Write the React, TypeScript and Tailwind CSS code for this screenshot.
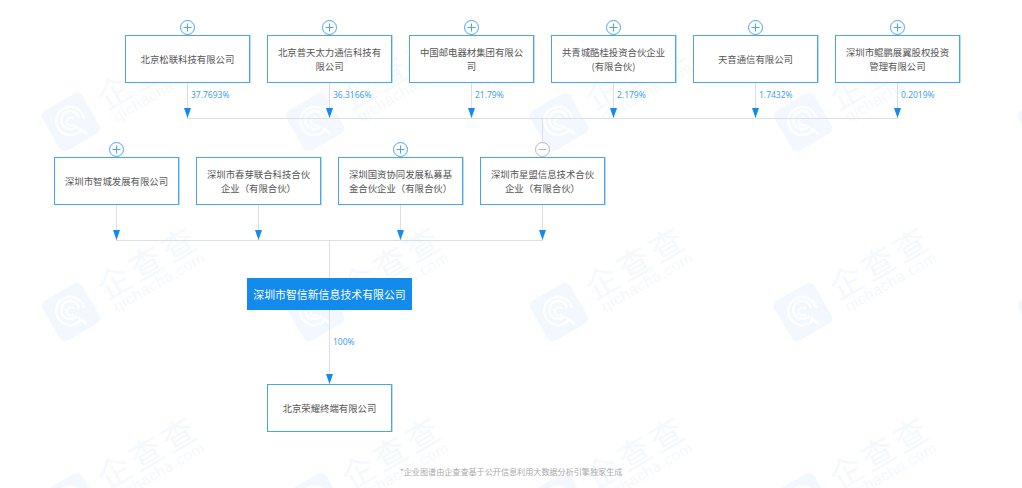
const cjk = "font-['Noto_Sans_CJK_SC','Noto_Sans',sans-serif]";

const shareholders = [
	{ lines: ["北京松联科技有限公司"], percent: "37.7693%" },
	{ lines: ["北京普天太力通信科技有", "限公司"], percent: "36.3166%" },
	{ lines: ["中国邮电器材集团有限公", "司"], percent: "21.79%" },
	{ lines: ["共青城酷桂投资合伙企业", "(有限合伙)"], percent: "2.179%" },
	{ lines: ["天音通信有限公司"], percent: "1.7432%" },
	{ lines: ["深圳市鲲鹏展翼股权投资", "管理有限公司"], percent: "0.2019%" },
];

const partners = [
	{ lines: ["深圳市智城发展有限公司"], minus: false },
	{ lines: ["深圳市春芽联合科技合伙", "企业（有限合伙）"], minus: false, hidden: true },
	{ lines: ["深圳国资协同发展私募基", "金合伙企业（有限合伙）"], minus: false },
	{ lines: ["深圳市星盟信息技术合伙", "企业（有限合伙）"], minus: true },
];

const tiles = Array.from({ length: 15 }, (_, i) => i);

function Watermark({ logoOnly }: { logoOnly: boolean }) {
	return (
		<div className="relative h-[60px] w-[60px]">
			<svg viewBox="0 0 60 60" className="h-[60px] w-[60px]">
				<rect x="7" y="7" width="46" height="46" rx="6" fill="#f2f8fe" transform="rotate(-30 30 30)" />
				<path d="M40 38 A14 14 0 1 1 43 26" fill="none" stroke="#fff" strokeWidth="2.5" />
				<path d="M36 34 A9 9 0 1 1 38 26" fill="none" stroke="#fff" strokeWidth="2.5" />
				<path d="M33 32 A4 4 0 1 1 33 27" fill="none" stroke="#fff" strokeWidth="2" />
				<path d="M38 36 L46 42" stroke="#fff" strokeWidth="2.5" />
			</svg>
			{!logoOnly && (
				<>
					<div className="absolute left-[46px] top-[-41px] w-[120px] -rotate-[30deg] text-center text-[33px] leading-[40px] tracking-[4px] whitespace-nowrap text-[#f4f9fe]">
						企查查
					</div>
					<div className="absolute left-[58px] top-[-10px] w-[120px] -rotate-[30deg] text-center font-['Liberation_Sans',sans-serif] text-[15.5px] leading-[20px] tracking-[0.6px] whitespace-nowrap text-[#f4f9fe]">
						qichacha.com
					</div>
				</>
			)}
		</div>
	);
}

function Toggle({ minus, hidden }: { minus?: boolean; hidden?: boolean }) {
	const color = minus ? "#b5b5b5" : "#4ba5f0";
	if (hidden) return <div className="h-[15px] w-[15px]" />;
	return (
		<svg viewBox="0 0 15 15" className="h-[15px] w-[15px]">
			<circle cx="7.5" cy="7.5" r="7" fill="#fff" stroke={color} />
			<path d={minus ? "M3.5 7.5H11.5" : "M3.5 7.5H11.5M7.5 3.5V11.5"} stroke={color} />
		</svg>
	);
}

function Box({ lines }: { lines: string[] }) {
	return (
		<div className="flex h-[48px] w-[125px] flex-col items-center justify-center border border-[#4aa5f0] bg-white text-center text-[9.4px] leading-[14px] text-[#555] shadow-[1px_0_0_#b9ddfa]">
			{lines.map((line) => (
				<span key={line} className="whitespace-nowrap">
					{line}
				</span>
			))}
		</div>
	);
}

function Stem({ height, percent, labelTop = "top-[5px]", className = "" }: { height: string; percent?: string; labelTop?: string; className?: string }) {
	return (
		<div className={`relative w-px bg-[#dcdfe3] ${height} ${className}`}>
			{percent && (
				<span className={`absolute left-[4px] ${labelTop} font-['Noto_Sans',sans-serif] text-[8.5px] leading-[14px] whitespace-nowrap text-[#47a2ee]`}>
					{percent}
				</span>
			)}
			<svg viewBox="0 0 7 10" className="absolute bottom-0 left-[-3px] h-[10px] w-[7px]">
				<path d="M0 0H7L3.5 10Z" fill="#128bed" />
			</svg>
		</div>
	);
}

export default function App() {
	return (
		<div className={`relative h-[488px] w-[1022px] overflow-hidden bg-white ${cjk}`}>
			{/* watermark layer */}
			<div className="absolute left-[41px] top-[92px] grid grid-cols-[repeat(5,244px)] auto-rows-[190px]">
				{tiles.map((i) => (
					<Watermark key={i} logoOnly={i % 5 === 4} />
				))}
			</div>

			<div className="relative flex flex-col pt-[20px]">
				<div className="flex gap-[17px] pl-[125px]">
					{shareholders.map((s) => (
						<div key={s.percent} className="flex w-[125px] flex-col items-center">
							<Toggle />
							<Box lines={s.lines} />
							<Stem height="h-[35px]" percent={s.percent} />
						</div>
					))}
				</div>
				<div className="ml-[187px] h-px w-[711px] bg-[#dcdfe3]" />
				<div className="ml-[542px] h-[23px] w-px bg-[#dcdfe3]" />

				<div className="flex gap-[17px] pl-[54px]">
					{partners.map((p) => (
						<div key={p.lines[0]} className="flex w-[125px] flex-col items-center">
							<Toggle minus={p.minus} hidden={p.hidden} />
							<Box lines={p.lines} />
							<Stem height="h-[35px]" />
						</div>
					))}
				</div>
				<div className="ml-[116px] h-px w-[427px] bg-[#dcdfe3]" />
				<div className="ml-[329px] h-[37px] w-px bg-[#dcdfe3]" />

				<div className="ml-[247px] flex h-[32px] w-[165px] items-center justify-center bg-[#128bed] text-[10.9px] whitespace-nowrap text-white">
					深圳市智信新信息技术有限公司
				</div>
				<Stem height="h-[74px]" percent="100%" labelTop="top-[25px]" className="ml-[329px]" />
				<div className="ml-[267px]">
					<Box lines={["北京荣耀终端有限公司"]} />
				</div>

				<div className="ml-[400px] mt-[33px] text-[8.1px] leading-[14px] whitespace-nowrap text-[#aaa]">
					*企业图谱由企查查基于公开信息利用大数据分析引擎独家生成
				</div>
			</div>
		</div>
	);
}
